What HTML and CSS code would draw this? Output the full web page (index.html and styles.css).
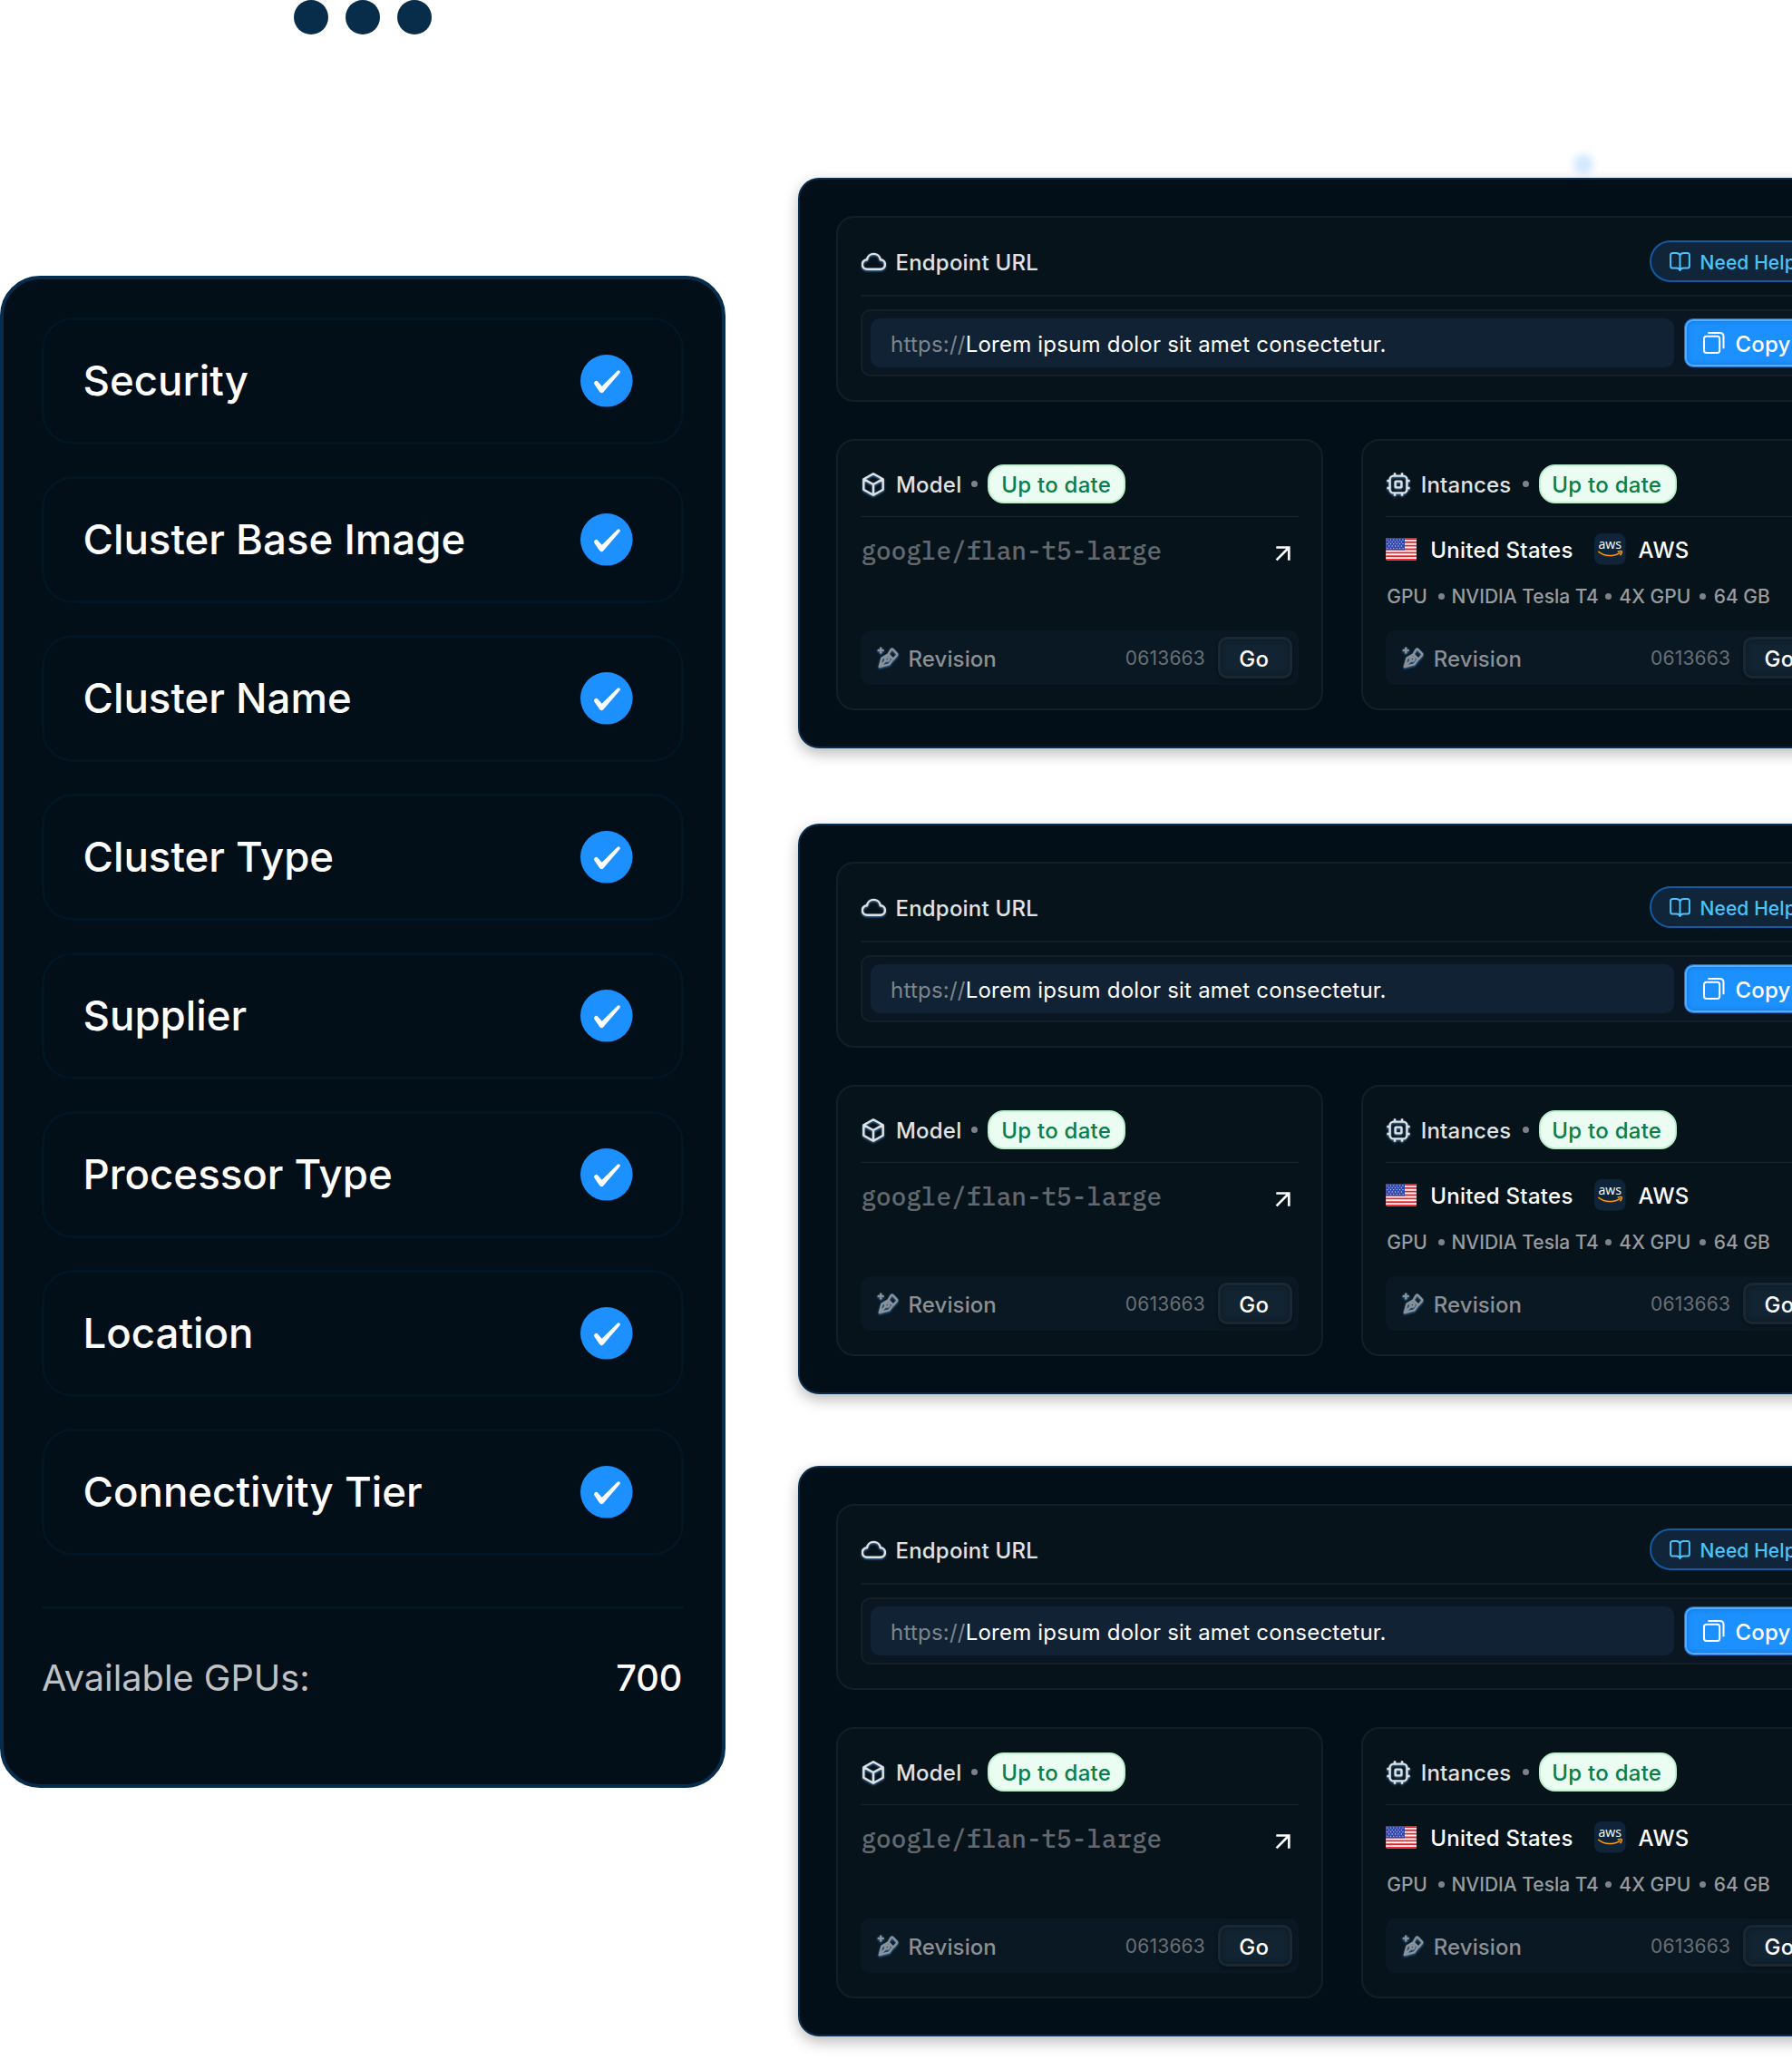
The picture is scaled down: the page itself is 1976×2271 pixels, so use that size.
FILE: index.html
```html
<!DOCTYPE html>
<html lang="en">
<head>
<meta charset="utf-8">
<title>Cluster endpoints</title>
<link rel="stylesheet" href="styles.css">
</head>
<body>
<svg class="sprite" aria-hidden="true">
  <symbol id="i-check" viewBox="0 0 58 58"><circle cx="28.8" cy="28.8" r="28.8" fill="#1c90ff"/><path fill="#fff" d="M15.5 32.8A2.4 2.4 0 0 1 19.4 30L23.7 34.8 40.9 17.7A1.8 1.8 0 0 1 43.6 20L25.3 41.2A2.6 2.6 0 0 1 21.2 41.1Z"/></symbol>
  <symbol id="i-cloud" viewBox="0 0 27 20"><path d="M6.3 18.8A5.3 5.3 0 0 1 6 8.2 7.5 7.5 0 0 1 20.8 8.2 5.3 5.3 0 0 1 20.5 18.8Z"/></symbol>
  <symbol id="i-cube" viewBox="0 0 24 26"><path d="M12 1.3 22.7 7.2V18.8L12 24.7 1.3 18.8V7.2ZM1.8 7.4 12 13 22.2 7.4M12 13V24.2"/></symbol>
  <symbol id="i-cpu" viewBox="0 0 26 26"><rect x="3.6" y="3.6" width="18.8" height="18.8" rx="4"/><rect x="9.6" y="9.6" width="6.8" height="6.8" rx=".6"/><path d="M9 .3V3.6M17 .3V3.6M9 22.4V25.7M17 22.4V25.7M.3 9H3.6M.3 17H3.6M22.4 9H25.7M22.4 17H25.7"/></symbol>
  <symbol id="i-pen" viewBox="0 0 24 24"><path d="M2.8 22.1 5.4 12.6 12.6 8.4 17.8 13.6 13.4 19.4ZM12.6 8 15.4 3.4Q16.4 1.8 17.7 3.1L21.8 7.4Q22.9 8.6 21.6 9.8L18.2 13.6M2.6 22.3 9.8 15"/><circle cx="11.3" cy="13.5" r="2.1"/><path d="M4.2.4V7.4M.6 3.9H7.8"/></symbol>
  <symbol id="i-book" viewBox="0 0 23 21"><path d="M11.5 3.6C10.8 2 9.4 1.1 7.6 1.1H3.1A2 2 0 0 0 1.1 3.1V15.6A2 2 0 0 0 3.1 17.6H7.8C9.8 17.6 11 18.4 11.5 20 12 18.4 13.2 17.6 15.2 17.6H19.9A2 2 0 0 0 21.9 15.6V3.1A2 2 0 0 0 19.9 1.1H15.4C13.6 1.1 12.2 2 11.5 3.6ZV19.6"/></symbol>
  <symbol id="i-copy" viewBox="0 0 24 24"><rect x="1" y="4.7" width="17.2" height="18.2" rx="2.6"/><path d="M5.4 1.1H18.4Q22.5 1.1 22.5 5.2V18.2"/></symbol>
  <symbol id="i-arrow" viewBox="0 0 17 17"><path d="M1.3 1.5H15.3V15.7M15.1 1.7 1.6 15.4"/></symbol>
  <symbol id="i-flag" viewBox="0 0 34 25"><path fill="#fff" d="M0 0H34V25H0Z"/><path stroke="#e8222b" stroke-width="1.93" d="M0 .96H34M0 4.8H34M0 8.65H34M0 12.5H34M0 16.35H34M0 20.2H34M0 24.04H34"/><path fill="#3348ab" d="M0 0H21V13.4H0Z"/><path stroke="#fff" stroke-width="1.1" stroke-linecap="round" stroke-dasharray="0 3.4" d="M2 2H20M3.7 4.3H20M2 6.6H20M3.7 8.9H20M2 11.2H20"/></symbol>
  <symbol id="i-aws" viewBox="0 0 35 35"><rect width="34.6" height="34.6" rx="8" fill="#0f2438"/><text x="4.4" y="17" class="aws-word" textLength="25.6" lengthAdjust="spacingAndGlyphs">aws</text><path fill="none" stroke="#f90" stroke-width="1.5" stroke-linecap="round" d="M4.8 20.4C12 25.8 21 25.8 28.2 21.6M26.2 19.9C28.5 19.3 30.2 19.4 30.3 19.9 30.4 20.8 29.8 22.6 28.9 23.8"/></symbol>
</svg>

<main class="page">
  <section class="setup">
    <div class="dots"><i></i><i></i><i></i></div>
    <div class="checklist">
      <ul class="steps">
        <li>Security<svg><use href="#i-check"/></svg></li>
        <li>Cluster Base Image<svg><use href="#i-check"/></svg></li>
        <li>Cluster Name<svg><use href="#i-check"/></svg></li>
        <li>Cluster Type<svg><use href="#i-check"/></svg></li>
        <li>Supplier<svg><use href="#i-check"/></svg></li>
        <li>Processor Type<svg><use href="#i-check"/></svg></li>
        <li>Location<svg><use href="#i-check"/></svg></li>
        <li>Connectivity Tier<svg><use href="#i-check"/></svg></li>
      </ul>
      <div class="total"><span>Available GPUs:</span><b>700</b></div>
    </div>
  </section>
  <section class="endpoints" id="endpoints"></section>
</main>

<template id="endpoint-card">
  <article class="card">
    <section class="panel endpoint">
      <header class="endpoint-head">
        <h2><svg class="ic cloud"><use href="#i-cloud"/></svg><span>Endpoint URL</span></h2>
        <a class="help"><svg class="book"><use href="#i-book"/></svg><span>Need Help</span></a>
      </header>
      <div class="url-row">
        <div class="url"><span class="scheme">https://</span><span class="addr">Lorem ipsum dolor sit amet consectetur.</span></div>
        <button class="copy"><svg><use href="#i-copy"/></svg><span>Copy</span></button>
      </div>
    </section>
    <div class="pair">
      <section class="panel model">
        <header class="head"><svg class="ic cube"><use href="#i-cube"/></svg><span class="t">Model</span><i class="dot"></i><span class="badge">Up to date</span></header>
        <div class="body repo"><code>google/flan-t5-large</code><svg class="arrow"><use href="#i-arrow"/></svg></div>
        <footer class="rev"><svg class="ic pen"><use href="#i-pen"/></svg><span class="rl">Revision</span><span class="num">0613663</span><button class="go">Go</button></footer>
      </section>
      <section class="panel inst">
        <header class="head"><svg class="ic cpu"><use href="#i-cpu"/></svg><span class="t">Intances</span><i class="dot"></i><span class="badge">Up to date</span></header>
        <div class="body">
          <div class="place"><svg class="flag"><use href="#i-flag"/></svg><span class="country">United States</span><svg class="aws"><use href="#i-aws"/></svg><span>AWS</span></div>
          <div class="spec"><span>GPU</span><i class="dot wide"></i><span>NVIDIA Tesla T4</span><i class="dot"></i><span>4X GPU</span><i class="dot mid"></i><span>64 GB</span></div>
        </div>
        <footer class="rev"><svg class="ic pen"><use href="#i-pen"/></svg><span class="rl">Revision</span><span class="num">0613663</span><button class="go">Go</button></footer>
      </section>
    </div>
  </article>
</template>
<script src="script.js"></script>
</body>
</html>
```
FILE: script.js
```js
const list = document.getElementById('endpoints');
const card = document.getElementById('endpoint-card');
for (let i = 0; i < 3; i++) list.append(card.content.cloneNode(true));
```
FILE: styles.css
```css
* { box-sizing: border-box; }
body {
  margin: 0;
  width: 1976px;
  height: 2271px;
  overflow: hidden;
  background: #fff;
  font-family: Inter, "Liberation Sans", sans-serif;
  color: #fff;
}
h2, ul, code, button { margin: 0; padding: 0; font: inherit; letter-spacing: inherit; color: inherit; border: 0; background: none; list-style: none; }
.sprite { position: absolute; width: 0; height: 0; }
svg { flex: none; overflow: visible; fill: none; }
.page { display: flex; gap: 80px; width: 1976px; height: 2271px; overflow: hidden; }

/* setup checklist */
.setup { width: 800px; flex: none; }
.dots { display: flex; gap: 19px; height: 304px; padding-left: 324px; }
.dots i { width: 38px; height: 38px; border-radius: 50%; background: #072d4a; }
.checklist { height: 1667.4px; padding: 42px; border: 4px solid #062d4d; border-radius: 44px; background: #020e18; }
.steps { display: flex; flex-direction: column; gap: 35px; }
.steps li {
  display: flex; align-items: center; justify-content: space-between;
  height: 140px; padding: 0 53px 2px 42.5px;
  border: 3px solid #021523; border-radius: 34px;
  font-size: 45.6px; font-weight: 500;
}
.steps svg { width: 58px; height: 58px; margin-top: 1px; }
.total { display: flex; justify-content: space-between; margin-top: 56px; padding: 52px 1.5px 0 0; border-top: 3px solid #021523; font-size: 39.7px; line-height: 48px; }
.total span { color: #bfc1c4; }
.total b { font-weight: 500; }

/* endpoint cards */
.endpoints { flex: none; width: 1200px; padding-top: 196px; background: radial-gradient(circle 18px at 866px 181px, #d1e8ff 0, #d9ecff 35%, #f6fbff 75%, #fff 100%) no-repeat; letter-spacing: .2px; }
.card {
  height: 628.5px; margin-bottom: 83.5px; padding: 40px;
  border: 2px solid #062d4d; border-radius: 23px; background: #020e18;
  box-shadow: 0 6px 16px rgba(0, 0, 0, .27);
}
.card:nth-child(2) { margin-bottom: 79.5px; }
.panel { border: 2px solid #131e26; border-radius: 20px; background: #07131b; padding: 26px 25px; }
.endpoint { height: 205px; padding-top: 25px; }
.endpoint-head { display: flex; justify-content: space-between; height: 62px; padding-bottom: 14px; border-bottom: 2px solid #151e26; }
h2 { display: flex; align-items: center; gap: 10.5px; padding-left: 1px; font-size: 24px; font-weight: 500; color: #e0e2e3; }
h2 span { padding-top: 3px; }
.ic { stroke: #e0e2e3; stroke-width: 2.4; stroke-linejoin: round; filter: drop-shadow(0 1.6px 1px rgba(90, 160, 230, .75)); }
.cloud { width: 27px; height: 20px; }
.help {
  display: flex; align-items: center; gap: 11px; width: 192.5px; height: 46px; padding-left: 20px;
  border: 2px solid #145aa3; border-radius: 23px; background: #102539;
  font-size: 21px; font-weight: 500; letter-spacing: .1px; color: #4cc3fb;
}
.help span { padding-top: 2px; }
.book { width: 23px; height: 21px; stroke: #4cc3fb; stroke-width: 2; stroke-linejoin: round; }
.url-row { display: flex; gap: 10.5px; height: 74px; margin-top: 14px; padding: 8px 9px; border: 2px solid #151e26; border-radius: 11px; background: #0a1722; }
.url { flex: none; width: 886px; display: flex; align-items: center; padding: 2px 0 0 22px; border-radius: 10px; background: #102233; font-size: 24px; letter-spacing: .22px; }
.scheme { color: #7d858d; }
.copy {
  flex: 1; display: flex; align-items: center; gap: 12px; padding-left: 20px;
  border: 1px solid #1a72cb; border-radius: 10px; background: #1c90ff;
  box-shadow: inset 0 0 0 2px #58abfa, inset 0 0 5px 2px #1673cf;
  font-size: 24px; font-weight: 500;
}
.copy svg { width: 24px; height: 24px; stroke: #fff; stroke-width: 2; }
.copy span { padding-top: 2px; }

.pair { display: flex; gap: 42.5px; margin-top: 41px; }
.pair .panel { flex: none; width: 536.7px; height: 298.7px; }
.head { display: flex; align-items: center; height: 58px; padding-bottom: 14px; border-bottom: 1px solid #1a242d; font-size: 24px; font-weight: 500; color: #e0e2e3; }
.head .t { padding-top: 2px; }
.cube { width: 24px; height: 26px; margin: 0 13px 0 2px; }
.cpu { width: 26px; height: 26px; margin: 0 11.5px 0 1px; }
.dot { flex: none; width: 7px; height: 7px; border-radius: 50%; background: #7c8287; }
.model .head .dot { margin: 0 11px 0 11px; }
.inst .head .dot { margin: 0 11px 0 12px; }
.badge {
  width: 152px; height: 43px; padding: 1px 1.5px 0 0; border: 2px solid #bbf1cd; border-radius: 18px;
  background: #ebfdf2; color: #0b7e4b; text-align: center; line-height: 40px; letter-spacing: .26px; white-space: nowrap;
}
.body { height: 125px; }
.repo { display: flex; justify-content: space-between; padding: 21px 8.5px 0 .5px; }
.repo code { font-family: "IBM Plex Mono", "Liberation Mono", monospace; font-size: 27.65px; font-weight: 500; line-height: 32px; letter-spacing: 0; color: #62686e; }
.arrow { width: 17px; height: 17px; margin-top: 11px; stroke: #fff; stroke-width: 2.7; }
.rev { display: flex; align-items: center; height: 60px; padding: 0 7.2px 0 18px; border-radius: 10px; background: #0a1823; }
.pen { width: 24px; height: 24px; stroke: #8c9297; stroke-width: 2.4; filter: drop-shadow(0 1.4px .8px rgba(60, 130, 200, .8)); }
.rl { padding: 2px 0 0 10.5px; font-size: 24px; font-weight: 500; letter-spacing: .1px; color: #8c9094; }
.num { margin-left: auto; font-size: 21px; color: #696f75; }
.go {
  width: 81.5px; height: 46px; margin-left: 14px; padding: 3px 2px 0 0; border: 3px solid #1a2833; border-radius: 10px;
  background: #122331; box-shadow: 0 2px 4px rgba(0, 0, 0, .4), inset 0 0 5px 1px #0c1a26; font-size: 24px; font-weight: 500;
}
.place { display: flex; align-items: center; height: 52.5px; padding-top: 18px; font-size: 24px; font-weight: 500; letter-spacing: .27px; }
.place span { padding-top: 3px; }
.flag { width: 34px; height: 25px; margin: 0 15px 0 0; clip-path: inset(0 round 2px); }
.aws { width: 35px; height: 35px; margin: 0 14px 0 23px; }
.aws-word { font: 500 14.5px "Open Sans", "Noto Sans", sans-serif; letter-spacing: 0; fill: #fff; }
.spec { display: flex; align-items: center; margin-top: 22px; padding-left: 1px; font-size: 21px; line-height: 26px; font-weight: 500; letter-spacing: 0; color: #989c9f; }
.spec .dot { margin: 0 8px 0 7.5px; }
.spec .wide { margin: 0 7.5px 0 12px; }
.spec .mid { margin: 0 8.5px 0 10px; }
```
